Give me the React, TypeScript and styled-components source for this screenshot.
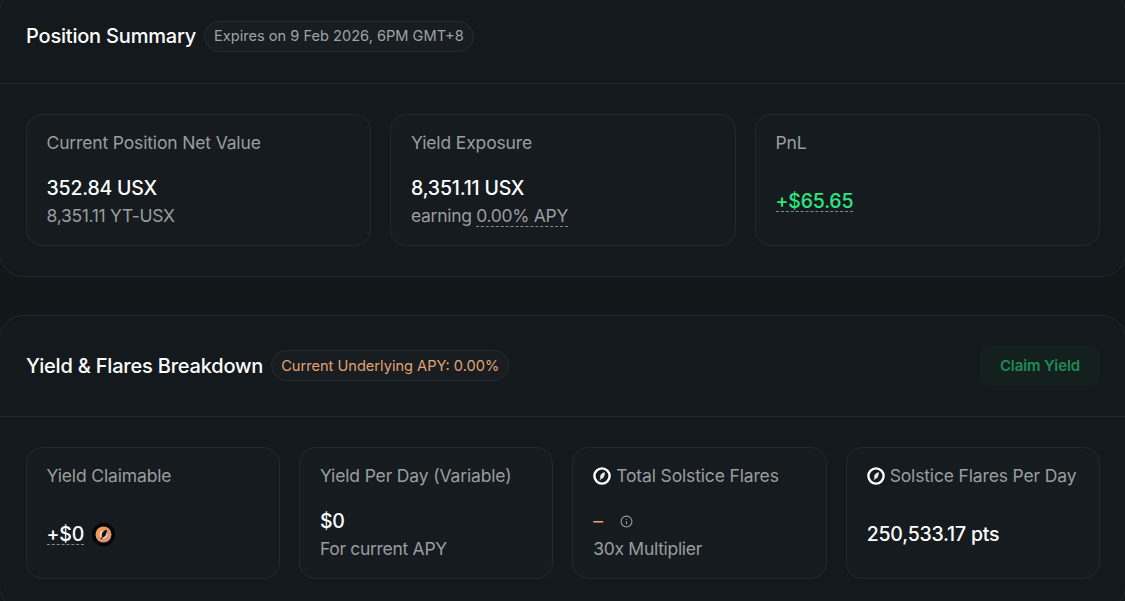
import React from "react";
import styled, { createGlobalStyle } from "styled-components";
import { Info } from "lucide-react";

const Global = createGlobalStyle`
  html, body { margin: 0; padding: 0; background: #12171a; overflow: hidden; }
  body { width: 1125px; height: 601px; font-family: Inter, "Liberation Sans", sans-serif; }
`;

const Page = styled.div`
  height: 612px;
  overflow: hidden;
  display: flex;
  flex-direction: column;
  gap: 38px;
  margin-top: -11px;
`;

const Panel = styled.section`
  background: #14191d;
  border: 1px solid #22282c;
  border-radius: 24px;
  margin: 0 -1px;
  flex: none;
`;

const Header = styled.header<{ $height: number }>`
  height: ${(p) => p.$height}px;
  box-sizing: border-box;
  padding: 0 25px 1px 26px;
  border-bottom: 1px solid #22282c;
  display: flex;
  align-items: center;
  gap: 8px;
`;

const Title = styled.h2`
  margin: 0;
  color: #fcfdfd;
  font-size: 20px;
  font-weight: 500;
  letter-spacing: -0.2px;
  white-space: nowrap;
`;

const Pill = styled.span<{ $tone?: "orange" }>`
  height: 31px;
  box-sizing: border-box;
  display: inline-flex;
  align-items: center;
  padding: 0 9px;
  border: 1px solid #262c31;
  border-radius: 16px;
  background: #171d21;
  color: ${(p) => (p.$tone === "orange" ? "#e3a273" : "#a0a3a5")};
  font-size: 14.6px;
  white-space: nowrap;
`;

const ClaimButton = styled.button`
  margin-left: auto;
  width: 120px;
  height: 40px;
  border: 0;
  border-radius: 8px;
  background: #14201e;
  color: #1f8a55;
  font: 600 15px Inter, "Liberation Sans", sans-serif;
  letter-spacing: -0.1px;
`;

const CardGrid = styled.div<{ $cols: number }>`
  display: grid;
  grid-template-columns: repeat(${(p) => p.$cols}, 1fr);
  gap: 19px;
  padding: 30px 25px 30px 25.5px;
`;

const Card = styled.article`
  height: 132px;
  box-sizing: border-box;
  padding: 17px 20px 13px 20px;
  border: 1px solid #23292d;
  border-radius: 16px;
  background: #161b1f;
  display: flex;
  flex-direction: column;
`;

const Label = styled.div`
  color: #9a9d9f;
  font-size: 17.5px;
  line-height: 22px;
  letter-spacing: -0.15px;
  display: flex;
  align-items: center;
  gap: 5px;
  margin-bottom: 17px;
  white-space: nowrap;
`;

const CardBody = styled.div`
  flex: 1;
  display: flex;
  flex-direction: column;
  justify-content: center;
  align-items: flex-start;
  gap: 3px;
`;

const Value = styled.div<{ $green?: boolean }>`
  color: ${(p) => (p.$green ? "#2ee67f" : "#fcfdfd")};
  font-size: 19.5px;
  font-weight: 500;
  line-height: 25px;
  letter-spacing: -0.2px;
  display: flex;
  align-items: center;
  gap: 8px;
  white-space: nowrap;
`;

const Sub = styled.div`
  color: #9a9d9f;
  font-size: 17.5px;
  line-height: 24px;
  letter-spacing: -0.3px;
  white-space: nowrap;
`;

const Dashed = styled.span`
  border-bottom: 1px dashed #85898c;
  line-height: 20px;
  display: inline-block;
`;

const Dash = styled.span`
  color: #e3a273;
  font-weight: 400;
  margin-right: 9px;
`;

const InfoIcon = styled(Info)`
  color: #9a9d9f;
`;

const FlareIcon = () => (
  <svg width="18" height="18" viewBox="0 0 18 18" aria-hidden="true">
    <circle cx="9" cy="9" r="7.6" fill="#14191d" stroke="#fff" strokeWidth="2.4" />
    <path d="M12 5.2c-2.8.3-4.8 2-4.9 4.6 0 .6.1 1.1.4 1.5l-1 1.8.6.3.9-1.5c2.2.1 3.7-2.1 4-6.7z" fill="#e4e6e7" />
  </svg>
);

const OrangeFlareIcon = () => (
  <svg width="23" height="23" viewBox="0 0 23 23" aria-hidden="true">
    <defs>
      <linearGradient id="orangeDisc" x1="0" y1="0" x2="1" y2="1">
        <stop offset="0" stopColor="#f6a14b" />
        <stop offset="1" stopColor="#d98a8c" />
      </linearGradient>
    </defs>
    <circle cx="11.5" cy="11.5" r="11.5" fill="#050505" />
    <circle cx="11.5" cy="11.5" r="8" fill="url(#orangeDisc)" />
    <circle cx="11.5" cy="11.5" r="3.8" fill="#f7d8b6" />
    <path d="M15 6.8c-3 .4-5.2 2.4-5.3 5.3 0 .6.1 1.1.3 1.5L8.6 16l.8.4 1.1-2c2.4.1 4.2-2.5 4.5-7.6z" fill="#111" />
  </svg>
);

export default function App() {
  return (
    <>
      <Global />
      <Page>
        <Panel>
          <Header $height={94}>
            <Title>Position Summary</Title>
            <Pill>Expires on 9 Feb 2026, 6PM GMT+8</Pill>
          </Header>
          <CardGrid $cols={3}>
            <Card>
              <Label>Current Position Net Value</Label>
              <CardBody>
                <Value>352.84 USX</Value>
                <Sub>8,351.11 YT-USX</Sub>
              </CardBody>
            </Card>
            <Card>
              <Label>Yield Exposure</Label>
              <CardBody>
                <Value>8,351.11 USX</Value>
                <Sub>
                  earning <Dashed>0.00% APY</Dashed>
                </Sub>
              </CardBody>
            </Card>
            <Card>
              <Label>PnL</Label>
              <CardBody>
                <Value $green>
                  <Dashed>+$65.65</Dashed>
                </Value>
              </CardBody>
            </Card>
          </CardGrid>
        </Panel>
        <Panel>
          <Header $height={101}>
            <Title>Yield &amp; Flares Breakdown</Title>
            <Pill $tone="orange">Current Underlying APY: 0.00%</Pill>
            <ClaimButton>Claim Yield</ClaimButton>
          </Header>
          <CardGrid $cols={4}>
            <Card>
              <Label>Yield Claimable</Label>
              <CardBody>
                <Value>
                  <Dashed>+$0</Dashed>
                  <OrangeFlareIcon />
                </Value>
              </CardBody>
            </Card>
            <Card>
              <Label>Yield Per Day (Variable)</Label>
              <CardBody>
                <Value>$0</Value>
                <Sub>For current APY</Sub>
              </CardBody>
            </Card>
            <Card>
              <Label>
                <FlareIcon />
                Total Solstice Flares
              </Label>
              <CardBody>
                <Value>
                  <Dash>–</Dash>
                  <InfoIcon size={13} />
                </Value>
                <Sub>30x Multiplier</Sub>
              </CardBody>
            </Card>
            <Card>
              <Label>
                <FlareIcon />
                Solstice Flares Per Day
              </Label>
              <CardBody>
                <Value>250,533.17 pts</Value>
              </CardBody>
            </Card>
          </CardGrid>
        </Panel>
      </Page>
    </>
  );
}
